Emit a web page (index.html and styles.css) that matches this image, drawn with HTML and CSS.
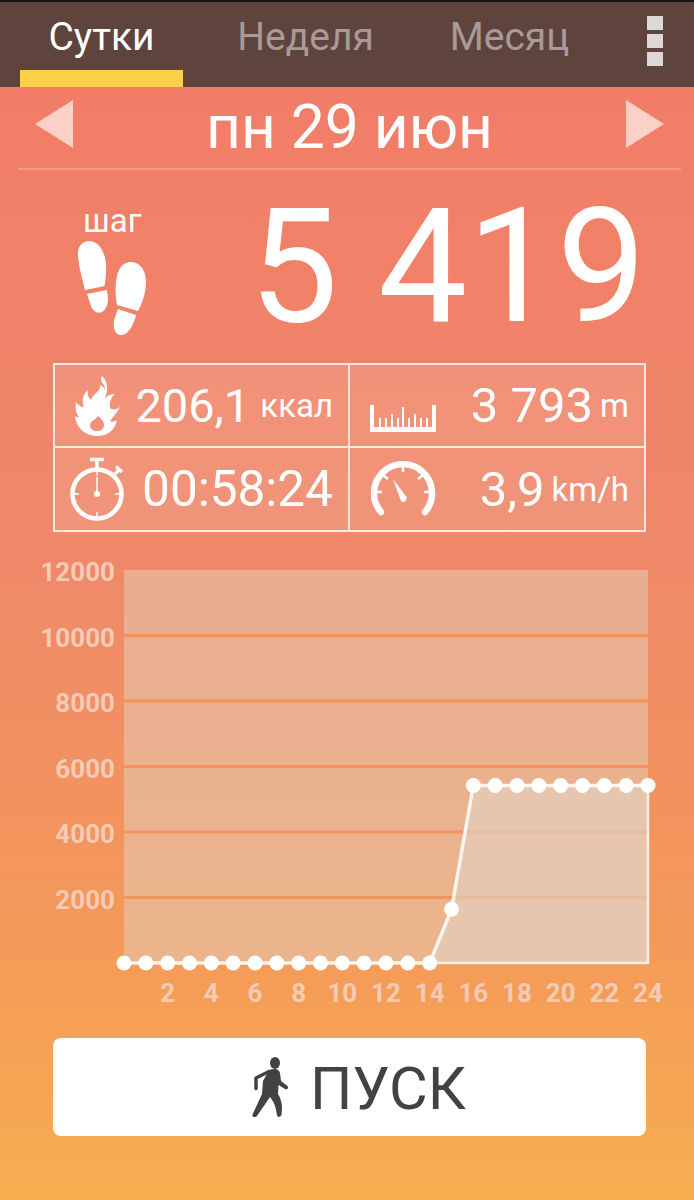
FILE: index.html
```html
<!DOCTYPE html>
<html lang="ru">
<head>
<meta charset="utf-8"/>
<meta content="width=device-width, initial-scale=1.0" name="viewport"/>
<title>Шагомер</title>
<link rel="stylesheet" href="styles.css">
</head>
<body>
<nav class="tabs">
  <div class="tab active">Сутки</div>
  <div class="tab">Неделя</div>
  <div class="tab">Месяц</div>
  <div class="menu-dots"><span></span><span></span><span></span></div>
</nav>

<main class="screen">
  <div class="date-row">
    <div class="arrow arrow-left"></div>
    <div class="date">пн 29 июн</div>
    <div class="arrow arrow-right"></div>
  </div>

  <section class="steps">
    <div class="steps-label">
      <span>шаг</span>
      <svg class="feet" width="70" height="96" viewBox="0 0 70 96" fill="#fff">
        <path d="M1 16C0 6 6 1 12 1C22 1 28 12 29 24C29.500 32 28.500 40 27.500 46L8 50C5 38 2 28 1 16Z"/>
        <path d="M10 54L29.500 50C32 57 31.500 66 27 70.500C22 75 16 72 14 66Z"/>
        <path d="M54 22C64 22 69 32 69 42C69 53 65 63 61 71L40 65C38 55 38 45 40 36C42 27 47 22 54 22Z"/>
        <path d="M41 69L59 75C57 84 52 94 45 95C38 96 36 88 37 81C38 76 40 72 41 69Z"/>
      </svg>
    </div>
    <div class="steps-count">5 419</div>
  </section>

  <section class="stats">
    <div class="cell">
      <svg class="icon icon-fire" width="46" height="60" viewBox="0 0 46 60" fill="#fff">
        <path fill-rule="evenodd" d="M27 0C23 5 31 8 30 14C29 11 27 10 25 9C27 15 18 17 16 24C13 21 12 18 13 14C7 19 7 25 9 31C6 31 3 29 1 26C0 33 1 38 4 41C2 41 1 41 0 40C1 51 10 60 22 60C33 60 40 54 42 44C39 46 37 46 35 45C38 41 42 37 45 31C41 34 37 34 35 32C34 27 36 21 40 18C35 18 31 20 29 24C33 16 34 7 27 0ZM23 40C26 43 29 45 29 49C29 53 26 55 22 55C18 55 15 53 15 49C15 45 21 44 23 40Z"/>
      </svg>
      <span class="cell-text"><span class="value val-kcal">206,1</span><span class="unit unit-kcal">ккал</span></span>
    </div>
    <div class="cell cell-right cell-mid">
      <svg class="icon icon-ruler" width="66" height="27" viewBox="0 0 66 27">
        <path d="M0 0H4V22H62V0H66V27H0Z" fill="#fff"/>
        <path d="M10 23V13M16 23V13M22 23V9M28 23V13M33 23V2M39 23V13M45 23V9M51 23V13M57 23V13" fill="none" stroke="#fff" stroke-width="2"/>
      </svg>
      <span class="cell-text"><span class="value val-dist">3 793</span><span class="unit">m</span></span>
    </div>
    <div class="cell cell-bottom">
      <svg class="icon" width="56" height="64" viewBox="0 0 56 64">
        <g fill="none" stroke="#fff">
          <circle cx="27" cy="37" r="24.500" stroke-width="4.500"/>
          <path d="M27 11V4M20 2.500H34M45 17L49 13M46 9.500L52 15" stroke-width="3.500"/>
          <path d="M27 14V19M27 55V60M4 37H9M45 37H50M27 37V20" stroke-width="1.500"/>
        </g>
        <circle cx="27" cy="37" r="3" fill="#fff"/>
      </svg>
      <span class="value val-time">00:58:24</span>
    </div>
    <div class="cell cell-right cell-mid cell-bottom">
      <svg class="icon" width="66" height="56" viewBox="0 0 66 56">
        <path d="M11 51A29 29 0 1 1 55 51" fill="none" stroke="#fff" stroke-width="6.500" stroke-linecap="round"/>
        <path d="M33 4V11M6 31H12M54 31H60M13 14L18 18M53 14L48 18" fill="none" stroke="#fff" stroke-width="2.500"/>
        <path d="M23 18L36.500 36A3.500 3.500 0 0 1 31 40Z" fill="#fff"/>
      </svg>
      <span class="cell-text"><span class="value val-speed">3,9</span><span class="unit">km/h</span></span>
    </div>
  </section>

  <svg class="chart" id="chart" width="694" height="460" viewBox="0 550 694 460"></svg>

  <button class="start-btn">
    <svg width="38" height="60" viewBox="0 0 38 60" fill="#424242">
      <ellipse cx="24" cy="6" rx="5" ry="6"/>
      <path d="M18 13C24 11 28 12 29 16L30 24L36.500 29C38 31 36 33 34 32L27.500 28L27 37C30 42 31 46 31 52L30.500 58C29 60.500 26.500 60.500 26 58L25 53C24 47 21.500 43 19 40L6 59C4 61 0.500 60 1.500 57.500L11 37L12 24Z"/>
      <path d="M18 14.500L5 21V31.500" fill="none" stroke="#424242" stroke-width="3.500" stroke-linecap="round" stroke-linejoin="round"/>
    </svg>
    <span>ПУСК</span>
  </button>
</main>

<script>
  // hourly step chart, one point per hour
  const chart = document.getElementById('chart');
  const NS = 'http://www.w3.org/2000/svg';
  const plot = { left: 124, right: 648, top: 570, bottom: 963, max: 12000 };
  const stepX = (plot.right - plot.left) / 24;
  const toY = v => plot.bottom - (plot.bottom - plot.top) * v / plot.max;

  const steps = [];
  for (let h = 0; h <= 24; h++) steps.push(h <= 14 ? 0 : h === 15 ? 1640 : 5419);
  const pts = steps.map((v, h) => [plot.left + h * stepX, toY(v)]);

  function add(tag, attrs, text) {
    const el = document.createElementNS(NS, tag);
    for (const k in attrs) el.setAttribute(k, attrs[k]);
    if (text) el.textContent = text;
    chart.appendChild(el);
    return el;
  }

  add('rect', { x: plot.left, y: plot.top, width: plot.right - plot.left, height: plot.bottom - plot.top, class: 'plot-bg' });
  for (let v = 2000; v <= 10000; v += 2000) {
    add('line', { x1: plot.left, x2: plot.right, y1: toY(v), y2: toY(v), class: 'grid-line' });
  }
  const line = pts.map(p => p.join(',')).join(' ');
  add('polygon', { points: `${line} ${plot.right},${plot.bottom} ${plot.left},${plot.bottom}`, class: 'plot-area' });

  for (let v = 2000; v <= 12000; v += 2000) {
    add('text', { x: 115, y: toY(v) + 11, class: 'axis-y' }, String(v));
  }
  for (let h = 2; h <= 24; h += 2) {
    add('text', { x: plot.left + h * stepX, y: 1002, class: 'axis-x' }, String(h));
  }

  // thin outline along the bottom and right, heavier over the data
  add('polyline', { points: `${pts[24].join(',')} ${plot.right},${plot.bottom} ${pts[14].join(',')}`, class: 'plot-edge' });
  add('polyline', { points: line, class: 'plot-line' });
  pts.forEach(p => add('circle', { cx: p[0], cy: p[1], r: 7.5, class: 'plot-dot' }));
</script>
</body>
</html>
```
FILE: styles.css
```css
html, body {
  margin: 0;
  height: 1200px;
  overflow: hidden;
  font-family: Roboto, 'Noto Sans', sans-serif;
  color: #fff;
}

.tabs {
  display: flex;
  height: 85px;
  padding-left: 20px;
  gap: 41px;
  background: #5f433d;
  border-top: 2px solid #1a1210;
  position: relative;
}
.tab {
  width: 163px;
  height: 68px;
  line-height: 71px;
  text-align: center;
  font-size: 39px;
  color: #a89a96;
}
.tab.active {
  color: #fff;
  border-bottom: 17px solid #fdd04a;
}
.menu-dots {
  position: absolute;
  top: 14px;
  right: 31px;
  display: flex;
  flex-direction: column;
  gap: 4px;
}
.menu-dots span {
  width: 16px;
  height: 14px;
  background: #dcd8d6;
}

.screen {
  height: 1113px;
  background: linear-gradient(180deg, #f17d68 0%, #ef8869 42%, #f4985a 75%, #f8ad4f 100%);
}

.date-row {
  display: flex;
  align-items: center;
  justify-content: space-between;
  height: 81px;
  margin: 0 13px 0 18px;
  padding: 0 17px;
  border-bottom: 2px solid #f79a85;
}
.date {
  font-size: 60.5px;
}
.arrow {
  width: 0;
  height: 0;
  margin-bottom: 7px;
  border-top: 24px solid transparent;
  border-bottom: 24px solid transparent;
}
.arrow-left {
  border-right: 38px solid #fad0c7;
}
.arrow-right {
  border-left: 38px solid #fad0c7;
}

.steps {
  display: flex;
  justify-content: space-between;
  height: 193px;
  padding: 0 48px 0 77px;
}
.steps-label {
  display: flex;
  flex-direction: column;
  margin-top: 33px;
}
.steps-label span {
  font-size: 33px;
  line-height: 36px;
  margin-left: 6px;
}
.feet {
  margin-top: 1px;
}
.steps-count {
  font-size: 159px;
  line-height: 194px;
  white-space: nowrap;
}

.stats {
  display: grid;
  grid-template-columns: 293px 296px;
  grid-template-rows: 81px 84px;
  width: 589px;
  margin-left: 53px;
  border: 2px solid #fbe9e0;
  background: rgba(255, 255, 255, 0.11);
}
.cell {
  display: flex;
  align-items: center;
  justify-content: flex-end;
  padding-right: 15px;
  box-sizing: border-box;
}
.cell .icon {
  margin-right: auto;
  margin-left: 20px;
}
.cell-mid {
  border-left: 2px solid #fbe9e0;
}
.cell-bottom {
  border-top: 2px solid #fbe9e0;
}
.cell-bottom:not(.cell-mid) .icon {
  margin-left: 15px;
}
.icon-ruler {
  margin-top: 25px;
}
.cell-text,
.value {
  white-space: nowrap;
}
.val-kcal { font-size: 47px; }
.val-dist { font-size: 49px; }
.val-time { font-size: 49.5px; }
.val-speed { font-size: 49px; }
.unit {
  display: inline-block;
  font-size: 33px;
  margin-left: 7px;
  vertical-align: 5px;
}
.unit-kcal {
  margin-left: 10px;
}

.chart {
  display: block;
  margin-top: 18px;
}
.plot-bg { fill: rgba(228, 198, 174, 0.6); }
.plot-area { fill: rgba(228, 209, 192, 0.65); }
.grid-line {
  stroke: #f2935f;
  stroke-width: 3;
}
.plot-edge {
  fill: none;
  stroke: #fbeee3;
  stroke-width: 2.500;
  stroke-linejoin: round;
}
.plot-line {
  fill: none;
  stroke: #fdf5ee;
  stroke-width: 3.500;
  stroke-linejoin: round;
}
.plot-dot { fill: #fff; }
.axis-y, .axis-x {
  font-family: Roboto, sans-serif;
  font-weight: 700;
  font-size: 26px;
  fill: #f5cbb6;
}
.axis-y { text-anchor: end; }
.axis-x { text-anchor: middle; }

.start-btn {
  display: flex;
  align-items: center;
  justify-content: center;
  gap: 21px;
  width: 593px;
  height: 98px;
  margin: 28px 0 0 53px;
  padding: 0 0 0 18px;
  border: none;
  border-radius: 8px;
  background: #fff;
  color: #424242;
  font-family: Roboto, sans-serif;
  font-size: 59.5px;
}
.start-btn span {
  margin-top: 4px;
}
```
